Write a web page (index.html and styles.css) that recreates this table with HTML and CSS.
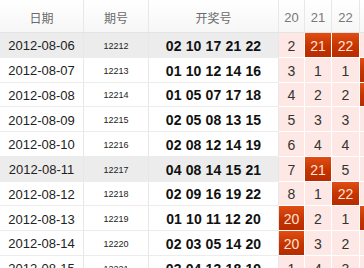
FILE: index.html
```html
<!DOCTYPE html>
<html>
<head>
<meta charset="utf-8">
<link rel="stylesheet" href="styles.css">
</head>
<body>
<div class="table">
  <div class="row head">
    <div class="c">日期</div><div class="c">期号</div><div class="c">开奖号</div>
    <div class="c n">20</div><div class="c n">21</div><div class="c n">22</div><div class="c n"></div>
  </div>
  <div class="row alt">
    <div class="c d">2012-08-06</div><div class="c q">12212</div><div class="c k">02 10 17 21 22</div>
    <div class="c p">2</div><div class="c p"><span class="hit">21</span></div><div class="c p"><span class="hit">22</span></div><div class="c p"></div>
  </div>
  <div class="row">
    <div class="c d">2012-08-07</div><div class="c q">12213</div><div class="c k">01 10 12 14 16</div>
    <div class="c p">3</div><div class="c p">1</div><div class="c p">1</div><div class="c p"><span class="hit"></span></div>
  </div>
  <div class="row">
    <div class="c d">2012-08-08</div><div class="c q">12214</div><div class="c k">01 05 07 17 18</div>
    <div class="c p">4</div><div class="c p">2</div><div class="c p">2</div><div class="c p"><span class="hit"></span></div>
  </div>
  <div class="row">
    <div class="c d">2012-08-09</div><div class="c q">12215</div><div class="c k">02 05 08 13 15</div>
    <div class="c p">5</div><div class="c p">3</div><div class="c p">3</div><div class="c p"></div>
  </div>
  <div class="row">
    <div class="c d">2012-08-10</div><div class="c q">12216</div><div class="c k">02 08 12 14 19</div>
    <div class="c p">6</div><div class="c p">4</div><div class="c p">4</div><div class="c p"></div>
  </div>
  <div class="row alt">
    <div class="c d">2012-08-11</div><div class="c q">12217</div><div class="c k">04 08 14 15 21</div>
    <div class="c p">7</div><div class="c p"><span class="hit">21</span></div><div class="c p">5</div><div class="c p"></div>
  </div>
  <div class="row">
    <div class="c d">2012-08-12</div><div class="c q">12218</div><div class="c k">02 09 16 19 22</div>
    <div class="c p">8</div><div class="c p">1</div><div class="c p"><span class="hit">22</span></div><div class="c p"></div>
  </div>
  <div class="row">
    <div class="c d">2012-08-13</div><div class="c q">12219</div><div class="c k">01 10 11 12 20</div>
    <div class="c p"><span class="hit">20</span></div><div class="c p">2</div><div class="c p">1</div><div class="c p"><span class="hit"></span></div>
  </div>
  <div class="row">
    <div class="c d">2012-08-14</div><div class="c q">12220</div><div class="c k">02 03 05 14 20</div>
    <div class="c p"><span class="hit">20</span></div><div class="c p">3</div><div class="c p">2</div><div class="c p"></div>
  </div>
  <div class="row">
    <div class="c d">2012-08-15</div><div class="c q">12221</div><div class="c k">03 04 13 18 19</div>
    <div class="c p">1</div><div class="c p">4</div><div class="c p">3</div><div class="c p"></div>
  </div>
</div>
</body>
</html>
```
FILE: styles.css
```css
html, body {
  margin: 0;
  padding: 0;
  background: #fff;
  overflow: hidden;
}
.table {
  width: 400px;
  font-family: "Liberation Sans", Arial, "Noto Sans CJK SC", sans-serif;
  color: #222;
}
.row {
  display: grid;
  grid-template-columns: 84px 65px 130px 26px 27px 28px 30px;
  height: 24.75px;
  box-sizing: border-box;
  border-bottom: 1px solid #ececec;
}
.row.head {
  height: 33px;
  background: linear-gradient(#ffffff, #f6f6f6);
  border-bottom: 1px solid #e4e4e4;
}
.row.alt {
  background: #ececec;
}
.c {
  display: flex;
  align-items: center;
  justify-content: center;
  border-right: 1px solid #e8e8e8;
  box-sizing: border-box;
  min-width: 0;
  padding-top: 2px;
}
.head .c {
  font-family: "Noto Sans CJK SC", "Liberation Sans", sans-serif;
  font-size: 12px;
  color: #6a6a6a;
  padding-top: 3px;
}
.head .c.n {
  font-family: "Liberation Sans", sans-serif;
  font-size: 13px;
  color: #777;
}
.d {
  font-size: 13px;
  color: #222;
}
.q {
  font-size: 9px;
  color: #222;
}
.k {
  font-size: 14px;
  font-weight: bold;
  color: #111;
  letter-spacing: 0.15px;
}
.p {
  position: relative;
  background: #fde8e5;
  border-right: 1px solid #fff;
  font-size: 14px;
  color: #333;
}
.row .p {
  margin-bottom: -1px;
  border-bottom: 1px solid #fff;
}
.hit {
  position: absolute;
  inset: 0 0 0 0;
  display: flex;
  align-items: center;
  justify-content: center;
  padding-top: 2px;
  background: linear-gradient(#e04e14, #c53300 55%, #b82c00);
  color: #fde3d6;
}
```
